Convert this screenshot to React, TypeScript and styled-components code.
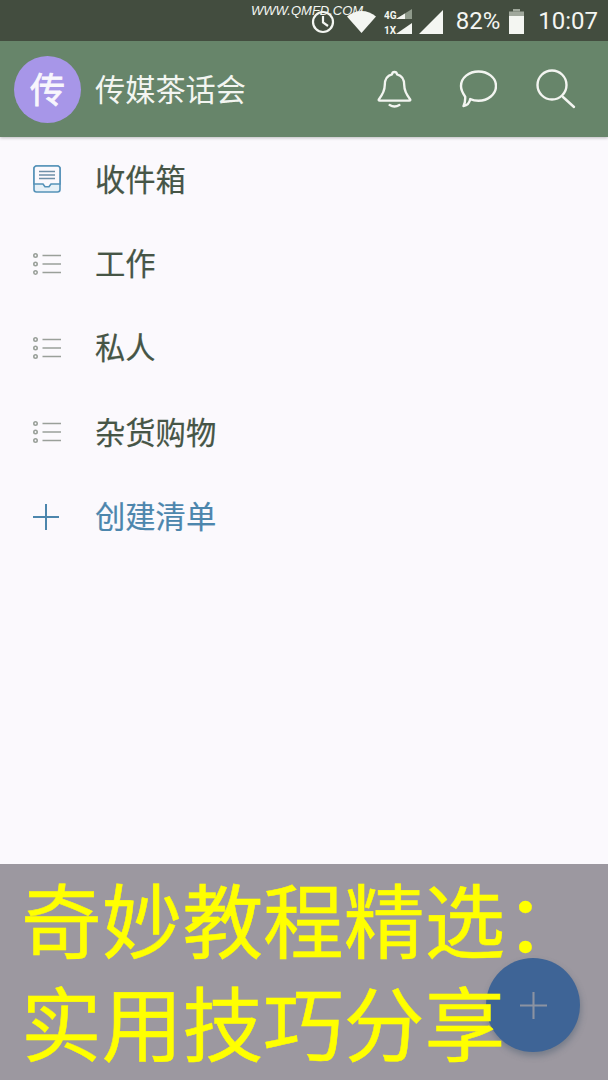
import React from 'react';
import styled, { createGlobalStyle } from 'styled-components';

const GlobalStyle = createGlobalStyle`
  html, body {
    margin: 0;
    padding: 0;
    background: #fbf9fd;
  }
  body {
    font-family: "Noto Sans CJK SC", "Noto Sans", sans-serif;
  }
`;

const Screen = styled.div`
  display: flex;
  flex-direction: column;
  width: 608px;
  height: 1080px;
  overflow: hidden;
  position: relative;
  background: #fbf9fd;
`;

const StatusBar = styled.div`
  position: relative;
  flex: 0 0 41px;
  display: flex;
  align-items: center;
  justify-content: flex-end;
  padding: 2px 10px 0 0;
  box-sizing: border-box;
  background: #434d3f;
  color: #f4f6f2;
  font-family: Roboto, sans-serif;
  font-size: 24px;
`;

const Watermark = styled.span`
  position: absolute;
  left: 251px;
  top: 3px;
  font-family: "Liberation Sans", sans-serif;
  font-size: 13px;
  font-style: italic;
  color: #f4f6f2;
`;

const StatusIcon = styled.svg<{ $mr: number }>`
  display: block;
  margin-right: ${p => p.$mr}px;
`;

const StatusText = styled.span<{ $mr: number }>`
  margin-right: ${p => p.$mr}px;
  line-height: 39px;
`;

const Header = styled.header`
  flex: 0 0 96px;
  display: flex;
  align-items: center;
  padding: 0 32px 0 14px;
  box-sizing: border-box;
  background: #67856a;
  box-shadow: 0 1px 3px rgba(0, 0, 0, 0.25);
  color: #f3f5f1;
`;

const Avatar = styled.div`
  width: 67px;
  height: 67px;
  padding-bottom: 3px;
  box-sizing: border-box;
  border-radius: 50%;
  display: flex;
  align-items: center;
  justify-content: center;
  background: #a796e8;
  font-size: 35px;
  font-weight: 400;
  -webkit-text-stroke: 0.8px #f8f6fd;
  color: #f8f6fd;
`;

const Title = styled.h1`
  flex: 1;
  margin: -2px 0 0 14px;
  font-size: 30.2px;
  font-weight: 400;
  line-height: 40px;
`;

const ActionIcon = styled.svg<{ $mr?: number }>`
  display: block;
  margin-right: ${p => p.$mr ?? 0}px;
`;

const Menu = styled.ul`
  flex: 1;
  list-style: none;
  margin: 0;
  padding: 0;
`;

const Row = styled.li<{ $accent?: boolean }>`
  height: 84.4px;
  display: flex;
  align-items: center;
  color: ${p => (p.$accent ? '#4c86ad' : '#465546')};
  font-size: 30.3px;
`;

const RowIcon = styled.div`
  flex: 0 0 96px;
  padding-left: 33px;
  box-sizing: border-box;
  display: flex;
  align-items: center;
`;

const RowLabel = styled.span`
  margin: -3px 0 0 -1px;
  -webkit-text-stroke: 0.2px currentColor;
`;

const Caption = styled.div`
  position: relative;
  flex: 0 0 216px;
  box-sizing: border-box;
  padding: 1px 0 0 21px;
  background: #9c98a0;
`;

const CaptionLine = styled.div`
  position: relative;
  z-index: 2;
  height: 103px;
  line-height: 103px;
  font-size: 80.7px;
  color: #ffff00;
  -webkit-text-stroke: 0.5px #ffff00;
  white-space: nowrap;
`;

const Fab = styled.button`
  position: absolute;
  z-index: 1;
  right: 28px;
  bottom: 28px;
  width: 94px;
  height: 94px;
  padding: 0;
  border: 0;
  border-radius: 50%;
  display: flex;
  align-items: center;
  justify-content: center;
  background: #3e6496;
  box-shadow: 1px 4px 6px rgba(70, 90, 110, 0.45);
`;

function ClockIcon() {
  return (
    <StatusIcon $mr={12} width="24" height="24" viewBox="0 0 24 24" fill="none" stroke="#f4f6f2" strokeWidth="2.2">
      <circle cx="12" cy="12" r="10" />
      <path d="M12 6v6.5l5 3.5" />
    </StatusIcon>
  );
}

function WifiIcon() {
  return (
    <StatusIcon $mr={8} width="29" height="24" viewBox="0 0 29 24">
      <path d="M0 6.5C8-1 21-1 29 6.5L14.5 23z" fill="#f4f6f2" />
    </StatusIcon>
  );
}

function DualSignalIcon() {
  return (
    <StatusIcon $mr={7} width="28" height="26" viewBox="0 0 28 26">
      <text x="0" y="10" fontSize="10" fontWeight="700" fontFamily="Roboto" fill="#f4f6f2">4G</text>
      <path d="M12 10 28 0v10z" fill="#8f9a8b" />
      <path d="M12 10 21 4.5V10z" fill="#f4f6f2" />
      <text x="0" y="25" fontSize="10" fontWeight="700" fontFamily="Roboto" fill="#f4f6f2">1X</text>
      <path d="M12 25 28 14v11z" fill="#f4f6f2" />
    </StatusIcon>
  );
}

function SignalIcon() {
  return (
    <StatusIcon $mr={13} width="24" height="24" viewBox="0 0 24 24">
      <path d="M0 24 24 0v24z" fill="#f4f6f2" />
    </StatusIcon>
  );
}

function BatteryIcon() {
  return (
    <StatusIcon $mr={14} width="15" height="25" viewBox="0 0 15 25">
      <path d="M4 0h7v2.5H4z" fill="#a0a89c" />
      <path d="M0 2.5h15V7H0z" fill="#a0a89c" />
      <path d="M0 7h15v18H0z" fill="#f4f6f2" />
    </StatusIcon>
  );
}

function BellIcon() {
  return (
    <ActionIcon $mr={47} width="35" height="38" viewBox="0 0 36 38" fill="none" stroke="#f3f5f1" strokeWidth="2.4" strokeLinejoin="round" strokeLinecap="round">
      <path d="M18 1.500c1.500 0 2.400 1 2.600 2.400C26 5.200 28 9.500 28 15c0 6 2 9.500 6 14.500.6.9.3 1.500-.8 1.500H2.800c-1.100 0-1.400-.6-.8-1.500C6 24.500 8 21 8 15c0-5.500 2-9.800 7.400-11.100.2-1.400 1.100-2.400 2.600-2.400z" />
      <path d="M13 35.500c3 1.800 7 1.800 10 0" />
    </ActionIcon>
  );
}

function ChatIcon() {
  return (
    <ActionIcon $mr={39} width="38" height="38" viewBox="0 0 38 38" fill="none" stroke="#f3f5f1" strokeWidth="2.4" strokeLinejoin="round">
      <path d="M19.500 1.500C29 1.500 37 7.700 37 16c0 8.300-8 14.800-17.500 14.800-3 0-5.800-.6-8.300-1.700-.5 2.800-2.600 6.300-6.700 6.900 1.300-2.300 1.900-5 1.700-9.300C3.700 23.200 2 19.800 2 16 2 7.700 10 1.500 19.500 1.500z" />
    </ActionIcon>
  );
}

function SearchIcon() {
  return (
    <ActionIcon width="40" height="40" viewBox="0 0 40 40" fill="none" stroke="#f3f5f1" strokeWidth="2.4" strokeLinecap="round">
      <circle cx="16" cy="16" r="14.500" />
      <path d="M27 28l11 10" />
    </ActionIcon>
  );
}

function InboxIcon() {
  return (
    <svg width="28" height="28" viewBox="0 0 28 28" fill="none" stroke="#5592b8" strokeWidth="1.6">
      <path d="M1 3.500a2.500 2.500 0 0 1 2.500-2.500h21A2.500 2.500 0 0 1 27 3.500V24.500a2.500 2.500 0 0 1-2.500 2.500h-21A2.500 2.500 0 0 1 1 24.500z" fill="#e6f0f7" />
      <path d="M1 3.500a2.500 2.500 0 0 1 2.500-2.500h21A2.500 2.500 0 0 1 27 3.500V19h-9l-2 2.800h-4L10 19H1z" fill="#fbf9fd" />
      <path d="M6 6.500h16M6 10h16M6 13.500h16" stroke="#6f8fa8" />
    </svg>
  );
}

function ListIcon() {
  return (
    <svg width="28" height="22" viewBox="0 0 28 22" fill="none" stroke="#9aa09a" strokeWidth="1.6">
      <circle cx="2.500" cy="2.500" r="1.700" />
      <circle cx="2.500" cy="11" r="1.700" />
      <circle cx="2.500" cy="19.500" r="1.700" />
      <path d="M9.500 2.500H28M9.500 11H28M9.500 19.500H28" />
    </svg>
  );
}

function PlusIcon({ size, color }: { size: number; color: string }) {
  return (
    <svg width={size} height={size} viewBox="0 0 26 26" fill="none" stroke={color} strokeWidth="2">
      <path d="M13 0v26M0 13h26" />
    </svg>
  );
}

const lists = [
  { label: '收件箱', icon: <InboxIcon /> },
  { label: '工作', icon: <ListIcon /> },
  { label: '私人', icon: <ListIcon /> },
  { label: '杂货购物', icon: <ListIcon /> },
];

export default function App() {
  return (
    <Screen>
      <GlobalStyle />
      <StatusBar>
        <Watermark>WWW.QMFD.COM</Watermark>
        <ClockIcon />
        <WifiIcon />
        <DualSignalIcon />
        <SignalIcon />
        <StatusText $mr={9}>82%</StatusText>
        <BatteryIcon />
        <StatusText $mr={0}>10:07</StatusText>
      </StatusBar>
      <Header>
        <Avatar>传</Avatar>
        <Title>传媒茶话会</Title>
        <BellIcon />
        <ChatIcon />
        <SearchIcon />
      </Header>
      <Menu>
        {lists.map(item => (
          <Row key={item.label}>
            <RowIcon>{item.icon}</RowIcon>
            <RowLabel>{item.label}</RowLabel>
          </Row>
        ))}
        <Row $accent>
          <RowIcon>
            <PlusIcon size={26} color="#4c86ad" />
          </RowIcon>
          <RowLabel>创建清单</RowLabel>
        </Row>
      </Menu>
      <Caption>
        <CaptionLine>奇妙教程精选：</CaptionLine>
        <CaptionLine>实用技巧分享</CaptionLine>
        <Fab>
          <PlusIcon size={27} color="#8c93a2" />
        </Fab>
      </Caption>
    </Screen>
  );
}
